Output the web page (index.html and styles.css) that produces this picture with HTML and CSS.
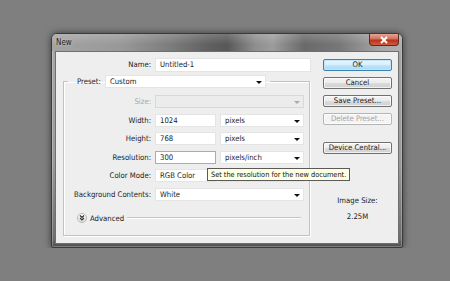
FILE: index.html
```html
<!DOCTYPE html>
<html lang="en">
<head>
    <meta charset="UTF-8">
    <title>New</title>
    <link rel="stylesheet" href="styles.css">
</head>
<body>
<div class="window">
    <div class="titlebar">
        <span class="title">New</span>
        <span class="close">
            <svg width="10" height="8" viewBox="0 0 10 8"><path d="M2 1 L8 7 M8 1 L2 7" stroke="#fff" stroke-width="2" fill="none"/></svg>
        </span>
    </div>
    <div class="client">
        <div class="form">
            <div class="name-row">
                <label class="lbl">Name:</label>
                <div class="field">Untitled-1</div>
            </div>
            <fieldset class="group">
                <legend class="preset">
                    <label>Preset:</label>
                    <div class="field select">Custom<i class="arrow"></i></div>
                </legend>
                <div class="rows">
                    <label class="lbl dim">Size:</label>
                    <div class="field select disabled span2"><i class="arrow"></i></div>

                    <label class="lbl">Width:</label>
                    <div class="field">1024</div>
                    <div class="field select">pixels<i class="arrow"></i></div>

                    <label class="lbl">Height:</label>
                    <div class="field">768</div>
                    <div class="field select">pixels<i class="arrow"></i></div>

                    <label class="lbl">Resolution:</label>
                    <div class="field focus">300</div>
                    <div class="field select">pixels/inch<i class="arrow"></i></div>

                    <label class="lbl">Color Mode:</label>
                    <div class="field">RGB Color</div>
                    <div class="field select"></div>

                    <label class="lbl">Background Contents:</label>
                    <div class="field select span2">White<i class="arrow"></i></div>
                </div>
                <div class="advanced">
                    <span class="adv-btn">
                        <svg width="6" height="6" viewBox="0 0 6 6"><path d="M1 0.5 L3 2.5 L5 0.5 M1 3 L3 5 L5 3" stroke="#333" stroke-width="1.1" fill="none"/></svg>
                    </span>
                    <span class="adv-text">Advanced</span>
                    <span class="adv-line"></span>
                </div>
            </fieldset>
        </div>
        <div class="side">
            <div class="btn default">OK</div>
            <div class="btn">Cancel</div>
            <div class="btn">Save Preset...</div>
            <div class="btn disabled">Delete Preset...</div>
            <div class="btn central">Device Central...</div>
            <div class="size-lbl">Image Size:</div>
            <div class="size-val">2.25M</div>
        </div>
    </div>
    <div class="tooltip">Set the resolution for the new document.</div>
</div>
</body>
</html>
```

FILE: styles.css
```css
*{margin: 0px;padding: 0px;box-sizing: border-box;}
body{
    background: #7f7f7f;
    padding: 33px 0 0 51px;
    font-family: "DejaVu Sans Condensed", "Liberation Sans", Arial, sans-serif;
    font-size: 7.7px;
    color: #1a1a1a;
}
.window{
    position: relative;
    width: 352px;
    height: 215px;
    border: 1px solid #3a3a3a;
    border-radius: 6px 6px 2px 2px;
    padding: 0 3px 3px;
    background: linear-gradient(to bottom, #a8a8a8 0%, #9a9a9a 60%, #6e6e6e 96%, #4e4e4e 100%);
    box-shadow: 0 0 7px rgba(0,0,0,0.55), inset 0 0 0 1px rgba(255,255,255,0.25);
}
.titlebar{
    height: 17px;
    margin: 0 -3px;
    padding: 0 3px 0 4px;
    display: flex;
    justify-content: space-between;
    border-radius: 5px 5px 0 0;
    background:
        linear-gradient(to bottom, rgba(255,255,255,0.18), rgba(255,255,255,0) 60%),
        linear-gradient(to right, #a4a4a4 0%, #989898 20%, #7c7c7c 34%, #626262 44%, #585858 50%, #8e8e8e 58%, #9c9c9c 63%, #6a6a6a 72%, #777 82%, #a6a6a6 94%, #b0b0b0 100%);
}
.title{
    font-size: 8px;
    line-height: 18px;
    color: #202020;
    text-shadow: 0 0 3px rgba(255,255,255,0.6);
}
.close{
    width: 30px;
    height: 12px;
    border: 1px solid #5a2a20;
    border-top: none;
    border-radius: 0 0 4px 4px;
    background: linear-gradient(to bottom, #e6a596 0%, #d0705c 45%, #b8321c 55%, #d4593e 100%);
    display: flex;
    align-items: center;
    justify-content: center;
}
.client{
    height: 193px;
    border: 1px solid #6f6f6f;
    background: #eeeeee;
    display: flex;
}
.form{
    width: 254px;
    padding: 6px 0 0 7px;
}
.name-row{
    display: grid;
    grid-template-columns: 88px 156px;
    column-gap: 4px;
    height: 14px;
}
.lbl{
    text-align: right;
    line-height: 13px;
    white-space: nowrap;
}
.lbl.dim{color: #a6a6a6;}
.field{
    position: relative;
    height: 14px;
    line-height: 12px;
    padding-left: 4px;
    background: #fff;
    border: 1px solid #e4e4e4;
    white-space: nowrap;
    overflow: hidden;
}
.field.focus{border-color: #8db2d8;}
.field.select{padding-left: 4px;}
.field.disabled{background: #ececec;border-color: #d8d8d8;}
.arrow{
    position: absolute;
    right: 3px;
    top: 5px;
    width: 0;
    height: 0;
    border-left: 3px solid transparent;
    border-right: 3px solid transparent;
    border-top: 3px solid #111;
}
.disabled .arrow{border-top-color: #aaa;}
.span2{grid-column: span 2;}
.group{
    margin-top: 3px;
    width: 247px;
    height: 161px;
    border: 1px solid #c2c2c2;
    box-shadow: inset 1px 1px 0 #fff, 1px 1px 0 #fff;
    padding: 0 4px 0 0;
}
.preset{
    margin-left: 4px;
    padding: 0 4px 0 9px;
    display: flex;
    align-items: center;
    column-gap: 4px;
}
.preset label{line-height: 13px;}
.preset .field{width: 161px;height: 13px;}
.rows{
    margin-top: 7px;
    display: grid;
    grid-template-columns: 87px 61px 84px;
    grid-auto-rows: 13px;
    column-gap: 4px;
    row-gap: 5.6px;
}
.rows .field{height: 13px;}
.advanced{
    margin: 12px 0 0 13px;
    display: flex;
    align-items: center;
    height: 11px;
}
.adv-btn{
    width: 10px;
    height: 10px;
    border-radius: 50%;
    border: 1px solid #b8b8b8;
    background: linear-gradient(to bottom, #fff, #dcdcdc);
    display: flex;
    align-items: center;
    justify-content: center;
}
.adv-text{margin-left: 3px;}
.adv-line{
    flex: 1;
    margin: 0 4px 0 3px;
    height: 2px;
    border-top: 1px solid #c4c4c4;
    border-bottom: 1px solid #fff;
}
.side{
    margin-left: 13px;
    padding-top: 7px;
    width: 69px;
    display: flex;
    flex-direction: column;
    align-items: center;
}
.btn{
    width: 69px;
    height: 12px;
    margin-bottom: 6px;
    line-height: 10px;
    text-align: center;
    border: 1px solid #707070;
    border-radius: 2px;
    background: linear-gradient(to bottom, #f4f4f4 0%, #ececec 48%, #dcdcdc 52%, #d0d0d0 100%);
    box-shadow: inset 0 0 0 1px rgba(255,255,255,0.7);
}
.btn.default{
    border-color: #3c7fb1;
    background: linear-gradient(to bottom, #eaf6fd 0%, #d9f0fc 48%, #bee6fd 52%, #a7d9f5 100%);
    box-shadow: inset 0 0 0 1px #c4e4f8;
}
.btn.disabled{
    color: #a3a3a3;
    border-color: #b5b5b5;
    background: #f4f4f4;
}
.btn.central{margin-top: 11px;}
.size-lbl{margin-top: 36px;line-height: 10px;}
.size-val{margin-top: 6px;line-height: 10px;}
.tooltip{
    position: absolute;
    left: 155px;
    top: 134px;
    height: 13px;
    padding: 0 3px;
    font-size: 7.3px;
    line-height: 11px;
    background: #ffffe1;
    border: 1px solid #5a5a5a;
    white-space: nowrap;
    color: #111;
}
```
